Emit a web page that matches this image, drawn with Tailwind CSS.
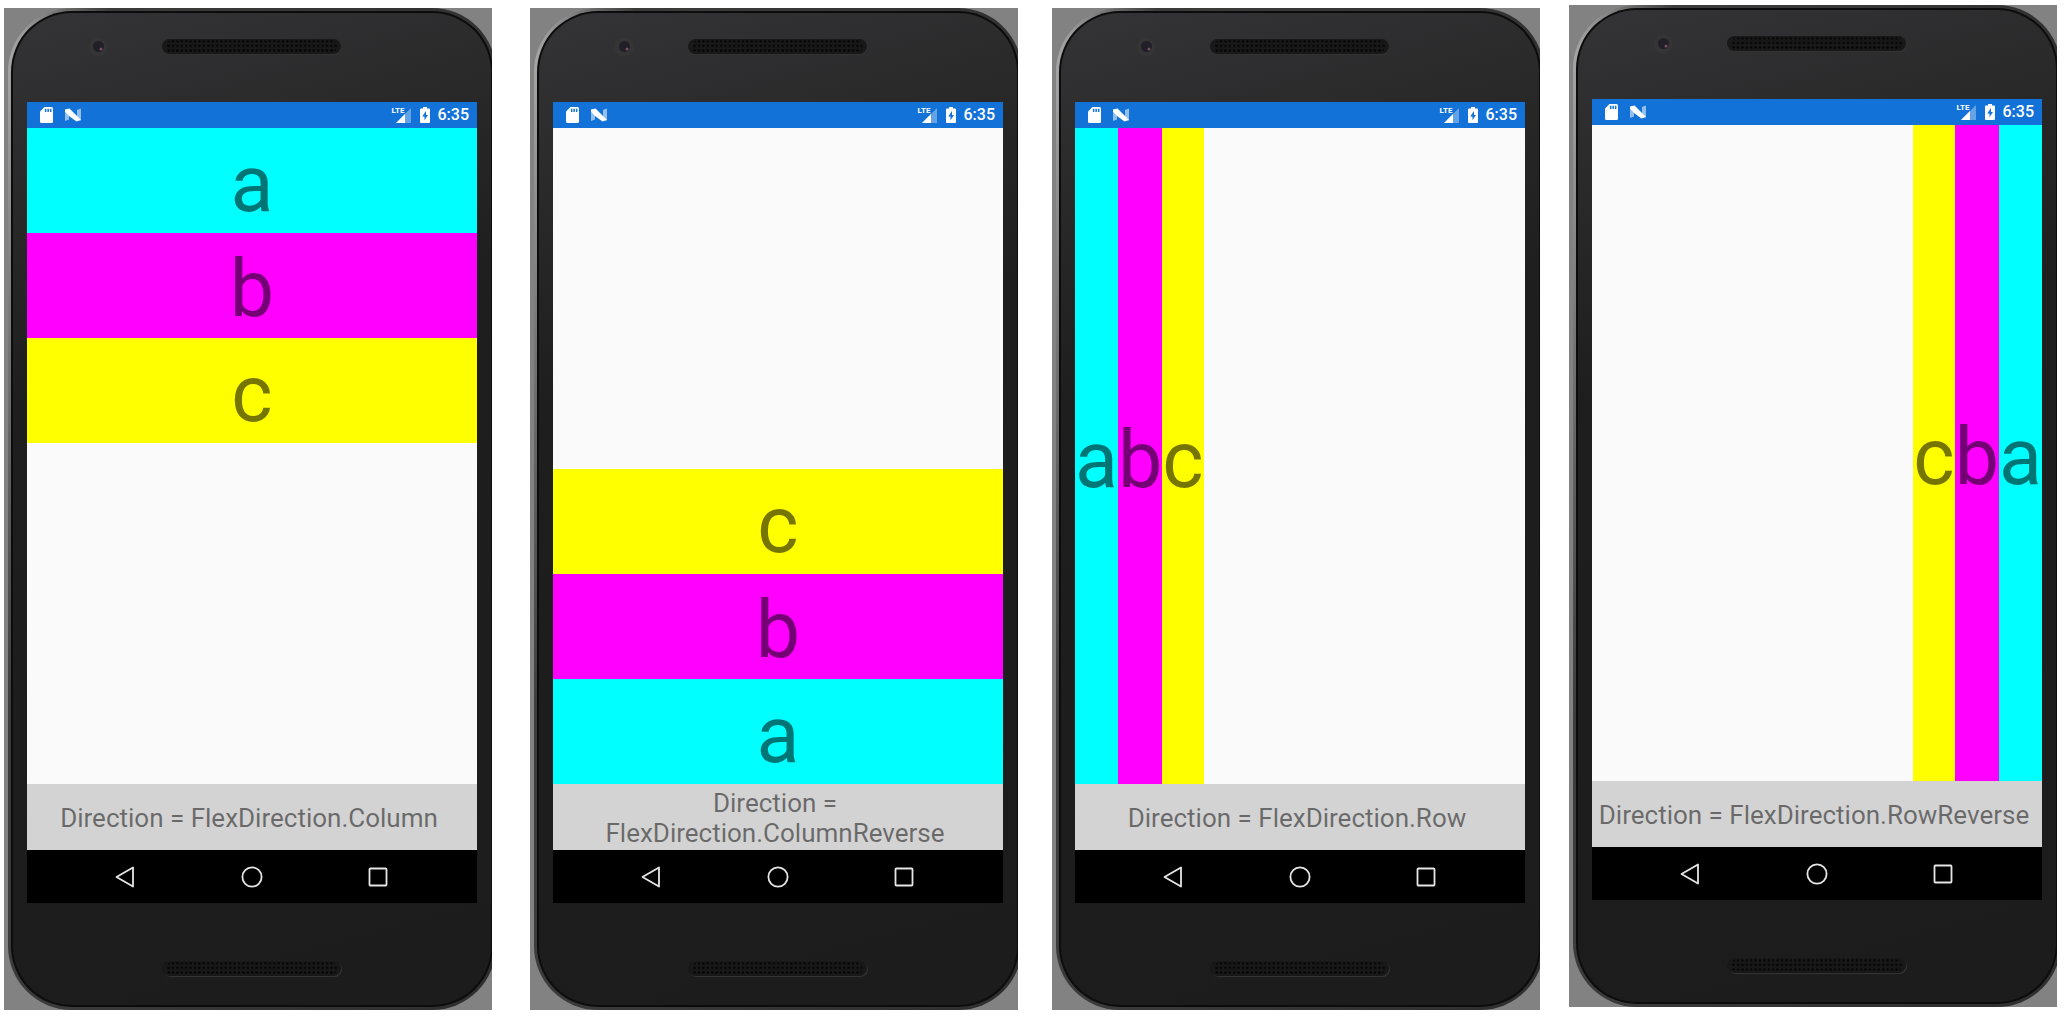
<!DOCTYPE html>
<html lang="en">
<head>
<meta charset="utf-8">
<title>FlexLayout directions</title>
<script src="https://cdn.jsdelivr.net/npm/@tailwindcss/browser@4"></script>
</head>
<body class="bg-white font-['Roboto',sans-serif]">
<svg class="absolute size-0" aria-hidden="true">
  <defs>
    <pattern id="mesh" width="4.4" height="4.6" patternUnits="userSpaceOnUse"><circle cx="2.2" cy="2.3" r="1.200" fill="#030303"/></pattern>
    <symbol id="speaker" viewBox="0 0 180 16">
      <rect x="1" y="1" width="179" height="15" rx="7.500" fill="#333"/>
      <rect x="0" y="0" width="179" height="15" rx="7.500" fill="#181818"/>
      <rect x="4" y="1" width="171" height="13" rx="6" fill="url(#mesh)"/>
    </symbol>
    <symbol id="camera" viewBox="0 0 20 20">
      <circle cx="10" cy="10" r="9.500" fill="#353535"/>
      <circle cx="10.500" cy="9.500" r="5.500" fill="#221f28"/>
      <circle cx="13" cy="12" r="1.500" fill="#7a4f62"/>
    </symbol>
    <symbol id="sd" viewBox="0 0 13 16">
      <path d="M4.500 0H11.500Q13 0 13 1.500V14.500Q13 16 11.500 16H1.500Q0 16 0 14.500V4.500Z" fill="#fff"/>
      <path d="M4.900 1.800h1.500v3.200H4.900zM7.400 1.800h1.500v3.200H7.400zM9.900 1.800h1.500v3.200H9.900z" fill="#1272d8"/>
    </symbol>
    <symbol id="nougat" viewBox="0 0 16 14">
      <path d="M0 1.500L4 2V11.500L0 13ZM12 2L16 .5V12.500L12 11.500Z" fill="#fff" opacity=".55"/>
      <path d="M0 1.500L4.500 .5L16 12L11.500 13.500L4 8L0 3.500Z" fill="#fff"/>
    </symbol>
    <symbol id="signal" viewBox="0 0 15 15">
      <path d="M15 0V15H0Z" fill="#fff" opacity=".35"/>
      <path d="M9 6V15H0Z" fill="#fff"/>
    </symbol>
    <symbol id="battery" viewBox="0 0 10 16">
      <path d="M3 0H7V1.500H9Q10 1.500 10 2.500V15Q10 16 9 16H1Q0 16 0 15V2.500Q0 1.500 1 1.500H3Z" fill="#fff"/>
      <path d="M6 4L2.200 9.500H4.500V13.300L8 7.900H6Z" fill="#1272d8"/>
    </symbol>
    <symbol id="back" viewBox="0 0 22 22"><path d="M18 1.500V20.500L1.500 11Z" fill="none" stroke="#e6e6e6" stroke-width="1.800" stroke-linejoin="round"/></symbol>
    <symbol id="home" viewBox="0 0 22 22"><circle cx="11" cy="11" r="9.600" fill="none" stroke="#e6e6e6" stroke-width="1.800"/></symbol>
    <symbol id="recent" viewBox="0 0 22 22"><rect x="2.500" y="2.500" width="17" height="17" rx=".8" fill="none" stroke="#e6e6e6" stroke-width="1.800"/></symbol>
  </defs>
</svg>
<main class="flex items-start pt-[5px] pl-1 pr-[7px]">

  <section class="mt-[3px] min-w-0 flex-1 overflow-hidden bg-[#828282] pl-1">
    <div class="-mr-1 rounded-[64px] bg-linear-98 from-[#b0b0b0] via-[#3c3c3c] via-16% to-[#2e2e2e] p-[3px]">
      <div class="rounded-[61px] bg-[#0c0c0c] p-[2px]">
        <div class="rounded-[59px] bg-linear-165 from-[#343436] via-[#1e1e1e] via-35% to-[#1c1c1c] px-[14px]">
          <div class="flex h-[89px] pt-6">
            <div class="grid h-4 flex-1 grid-cols-[1fr_180px_1fr] items-center">
              <svg class="ml-[61px] size-5"><use href="#camera"/></svg>
              <svg class="h-4 w-[180px]"><use href="#speaker"/></svg>
            </div>
          </div>
          <header class="flex h-[26px] items-center bg-[#1272d8] pr-2 pl-[13px] text-white">
            <svg class="h-4 w-[13px]"><use href="#sd"/></svg>
            <svg class="ml-3 h-[14px] w-4"><use href="#nougat"/></svg>
            <span class="relative ml-auto flex">
              <span class="absolute -top-px -left-1 font-['Liberation_Sans_Narrow','Roboto',sans-serif] text-[8px] leading-[8px] font-bold">LTE</span>
              <svg class="size-[15px]"><use href="#signal"/></svg>
            </span>
            <svg class="ml-[9px] h-4 w-[10px]"><use href="#battery"/></svg>
            <time class="ml-2 text-[16px] leading-[26px] font-medium">6:35</time>
          </header>
          <div class="flex min-h-[656px] flex-col bg-[#fafafa] text-center text-[79px] leading-[97px] text-black/54">
            <div class="bg-[#00ffff] pt-2">a</div>
            <div class="bg-[#ff00ff] pt-2">b</div>
            <div class="bg-[#ffff00] pt-2">c</div>
          </div>
          <p class="flex h-[66px] items-center justify-center bg-[#d3d3d3] pt-0.5 pr-1.5 text-center text-[26px] leading-[30px] text-black/50">Direction = FlexDirection.Column</p>
          <nav class="grid h-[53px] grid-cols-3 items-center justify-items-center bg-black px-9">
            <button aria-label="Back" class="size-[22px]"><svg class="size-[22px]"><use href="#back"/></svg></button>
            <button aria-label="Home" class="size-[22px]"><svg class="size-[22px]"><use href="#home"/></svg></button>
            <button aria-label="Recent apps" class="size-[22px]"><svg class="size-[22px]"><use href="#recent"/></svg></button>
          </nav>
          <div class="flex h-[102px] justify-center pt-[58px]"><svg class="h-4 w-[180px]"><use href="#speaker"/></svg></div>
        </div>
      </div>
    </div>
  </section>

  <section class="mt-[3px] ml-[38px] min-w-0 flex-1 overflow-hidden bg-[#828282] pl-1">
    <div class="-mr-1 rounded-[64px] bg-linear-98 from-[#b0b0b0] via-[#3c3c3c] via-16% to-[#2e2e2e] p-[3px]">
      <div class="rounded-[61px] bg-[#0c0c0c] p-[2px]">
        <div class="rounded-[59px] bg-linear-165 from-[#343436] via-[#1e1e1e] via-35% to-[#1c1c1c] px-[14px]">
          <div class="flex h-[89px] pt-6">
            <div class="grid h-4 flex-1 grid-cols-[1fr_180px_1fr] items-center">
              <svg class="ml-[61px] size-5"><use href="#camera"/></svg>
              <svg class="h-4 w-[180px]"><use href="#speaker"/></svg>
            </div>
          </div>
          <header class="flex h-[26px] items-center bg-[#1272d8] pr-2 pl-[13px] text-white">
            <svg class="h-4 w-[13px]"><use href="#sd"/></svg>
            <svg class="ml-3 h-[14px] w-4"><use href="#nougat"/></svg>
            <span class="relative ml-auto flex">
              <span class="absolute -top-px -left-1 font-['Liberation_Sans_Narrow','Roboto',sans-serif] text-[8px] leading-[8px] font-bold">LTE</span>
              <svg class="size-[15px]"><use href="#signal"/></svg>
            </span>
            <svg class="ml-[9px] h-4 w-[10px]"><use href="#battery"/></svg>
            <time class="ml-2 text-[16px] leading-[26px] font-medium">6:35</time>
          </header>
          <div class="flex min-h-[656px] flex-col-reverse bg-[#fafafa] text-center text-[79px] leading-[97px] text-black/54">
            <div class="bg-[#00ffff] pt-2">a</div>
            <div class="bg-[#ff00ff] pt-2">b</div>
            <div class="bg-[#ffff00] pt-2">c</div>
          </div>
          <p class="flex h-[66px] items-center justify-center bg-[#d3d3d3] pt-0.5 pr-1.5 text-center text-[26px] leading-[30px] text-black/50">Direction = FlexDirection.ColumnReverse</p>
          <nav class="grid h-[53px] grid-cols-3 items-center justify-items-center bg-black px-9">
            <button aria-label="Back" class="size-[22px]"><svg class="size-[22px]"><use href="#back"/></svg></button>
            <button aria-label="Home" class="size-[22px]"><svg class="size-[22px]"><use href="#home"/></svg></button>
            <button aria-label="Recent apps" class="size-[22px]"><svg class="size-[22px]"><use href="#recent"/></svg></button>
          </nav>
          <div class="flex h-[102px] justify-center pt-[58px]"><svg class="h-4 w-[180px]"><use href="#speaker"/></svg></div>
        </div>
      </div>
    </div>
  </section>

  <section class="mt-[3px] ml-[34px] min-w-0 flex-1 overflow-hidden bg-[#828282] pl-1">
    <div class="-mr-1 rounded-[64px] bg-linear-98 from-[#b0b0b0] via-[#3c3c3c] via-16% to-[#2e2e2e] p-[3px]">
      <div class="rounded-[61px] bg-[#0c0c0c] p-[2px]">
        <div class="rounded-[59px] bg-linear-165 from-[#343436] via-[#1e1e1e] via-35% to-[#1c1c1c] px-[14px]">
          <div class="flex h-[89px] pt-6">
            <div class="grid h-4 flex-1 grid-cols-[1fr_180px_1fr] items-center">
              <svg class="ml-[61px] size-5"><use href="#camera"/></svg>
              <svg class="h-4 w-[180px]"><use href="#speaker"/></svg>
            </div>
          </div>
          <header class="flex h-[26px] items-center bg-[#1272d8] pr-2 pl-[13px] text-white">
            <svg class="h-4 w-[13px]"><use href="#sd"/></svg>
            <svg class="ml-3 h-[14px] w-4"><use href="#nougat"/></svg>
            <span class="relative ml-auto flex">
              <span class="absolute -top-px -left-1 font-['Liberation_Sans_Narrow','Roboto',sans-serif] text-[8px] leading-[8px] font-bold">LTE</span>
              <svg class="size-[15px]"><use href="#signal"/></svg>
            </span>
            <svg class="ml-[9px] h-4 w-[10px]"><use href="#battery"/></svg>
            <time class="ml-2 text-[16px] leading-[26px] font-medium">6:35</time>
          </header>
          <div class="flex min-h-[656px] flex-row bg-[#fafafa] text-center text-[79px] leading-[97px] text-black/54">
            <div class="flex items-center bg-[#00ffff] pt-2">a</div>
            <div class="flex items-center bg-[#ff00ff] pt-2">b</div>
            <div class="flex items-center bg-[#ffff00] pt-2">c</div>
          </div>
          <p class="flex h-[66px] items-center justify-center bg-[#d3d3d3] pt-0.5 pr-1.5 text-center text-[26px] leading-[30px] text-black/50">Direction = FlexDirection.Row</p>
          <nav class="grid h-[53px] grid-cols-3 items-center justify-items-center bg-black px-9">
            <button aria-label="Back" class="size-[22px]"><svg class="size-[22px]"><use href="#back"/></svg></button>
            <button aria-label="Home" class="size-[22px]"><svg class="size-[22px]"><use href="#home"/></svg></button>
            <button aria-label="Recent apps" class="size-[22px]"><svg class="size-[22px]"><use href="#recent"/></svg></button>
          </nav>
          <div class="flex h-[102px] justify-center pt-[58px]"><svg class="h-4 w-[180px]"><use href="#speaker"/></svg></div>
        </div>
      </div>
    </div>
  </section>

  <section class="ml-[29px] min-w-0 flex-1 overflow-hidden bg-[#828282] pl-1">
    <div class="-mr-1 rounded-[64px] bg-linear-98 from-[#b0b0b0] via-[#3c3c3c] via-16% to-[#2e2e2e] p-[3px]">
      <div class="rounded-[61px] bg-[#0c0c0c] p-[2px]">
        <div class="rounded-[59px] bg-linear-165 from-[#343436] via-[#1e1e1e] via-35% to-[#1c1c1c] px-[14px]">
          <div class="flex h-[89px] pt-6">
            <div class="grid h-4 flex-1 grid-cols-[1fr_180px_1fr] items-center">
              <svg class="ml-[61px] size-5"><use href="#camera"/></svg>
              <svg class="h-4 w-[180px]"><use href="#speaker"/></svg>
            </div>
          </div>
          <header class="flex h-[26px] items-center bg-[#1272d8] pr-2 pl-[13px] text-white">
            <svg class="h-4 w-[13px]"><use href="#sd"/></svg>
            <svg class="ml-3 h-[14px] w-4"><use href="#nougat"/></svg>
            <span class="relative ml-auto flex">
              <span class="absolute -top-px -left-1 font-['Liberation_Sans_Narrow','Roboto',sans-serif] text-[8px] leading-[8px] font-bold">LTE</span>
              <svg class="size-[15px]"><use href="#signal"/></svg>
            </span>
            <svg class="ml-[9px] h-4 w-[10px]"><use href="#battery"/></svg>
            <time class="ml-2 text-[16px] leading-[26px] font-medium">6:35</time>
          </header>
          <div class="flex min-h-[656px] flex-row-reverse bg-[#fafafa] text-center text-[79px] leading-[97px] text-black/54">
            <div class="flex items-center bg-[#00ffff] pt-2">a</div>
            <div class="flex items-center bg-[#ff00ff] pt-2">b</div>
            <div class="flex items-center bg-[#ffff00] pt-2">c</div>
          </div>
          <p class="flex h-[66px] items-center justify-center bg-[#d3d3d3] pt-0.5 pr-1.5 text-center text-[26px] leading-[30px] text-black/50">Direction = FlexDirection.RowReverse</p>
          <nav class="grid h-[53px] grid-cols-3 items-center justify-items-center bg-black px-9">
            <button aria-label="Back" class="size-[22px]"><svg class="size-[22px]"><use href="#back"/></svg></button>
            <button aria-label="Home" class="size-[22px]"><svg class="size-[22px]"><use href="#home"/></svg></button>
            <button aria-label="Recent apps" class="size-[22px]"><svg class="size-[22px]"><use href="#recent"/></svg></button>
          </nav>
          <div class="flex h-[102px] justify-center pt-[58px]"><svg class="h-4 w-[180px]"><use href="#speaker"/></svg></div>
        </div>
      </div>
    </div>
  </section>
</main>
</body>
</html>
